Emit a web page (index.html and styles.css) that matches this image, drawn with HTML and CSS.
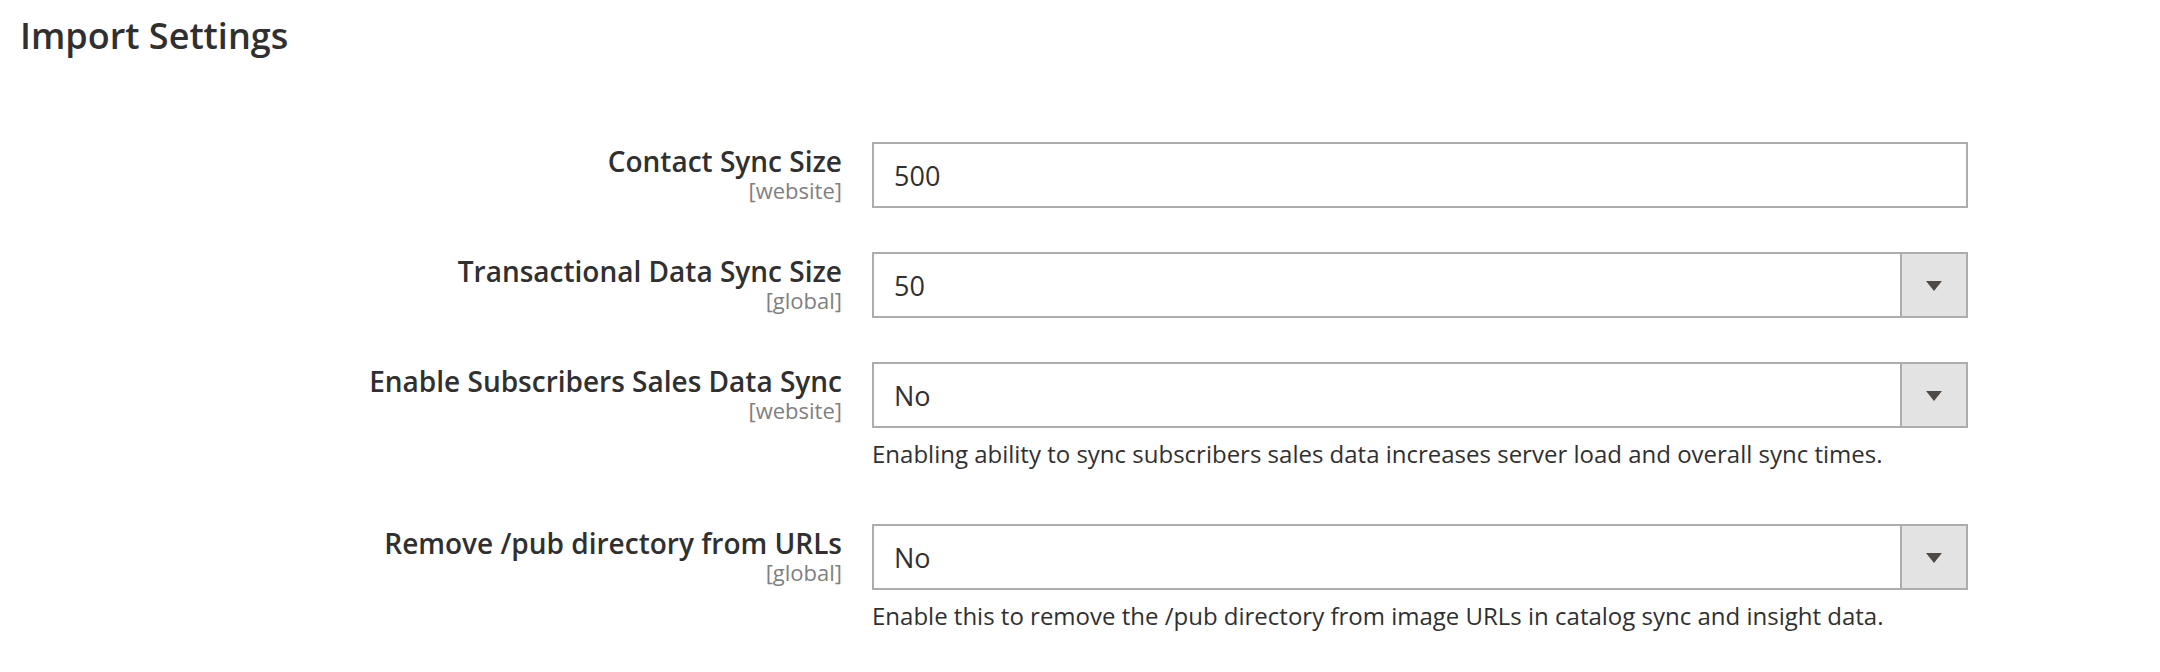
FILE: index.html
```html
<!DOCTYPE html>
<html lang="en">
<head>
<meta charset="utf-8">
<title>Import Settings</title>
<link rel="stylesheet" href="styles.css">
</head>
<body>
<div class="page">
  <h1 class="section-title">Import Settings</h1>
  <div class="fields">
    <div class="field">
      <div class="field-label">
        <span class="label-text">Contact Sync Size</span>
        <span class="scope">[website]</span>
      </div>
      <div class="field-control">
        <div class="input"><span class="value">500</span></div>
      </div>
    </div>
    <div class="field">
      <div class="field-label">
        <span class="label-text">Transactional Data Sync Size</span>
        <span class="scope">[global]</span>
      </div>
      <div class="field-control">
        <div class="input select"><span class="value">50</span><span class="select-btn"><svg width="16" height="10" viewBox="0 0 16 10"><polygon points="0,0 16,0 8,10" fill="#514943"/></svg></span></div>
      </div>
    </div>
    <div class="field">
      <div class="field-label">
        <span class="label-text">Enable Subscribers Sales Data Sync</span>
        <span class="scope">[website]</span>
      </div>
      <div class="field-control">
        <div class="input select"><span class="value">No</span><span class="select-btn"><svg width="16" height="10" viewBox="0 0 16 10"><polygon points="0,0 16,0 8,10" fill="#514943"/></svg></span></div>
        <p class="note">Enabling ability to sync subscribers sales data increases server load and overall sync times.</p>
      </div>
    </div>
    <div class="field">
      <div class="field-label">
        <span class="label-text">Remove /pub directory from URLs</span>
        <span class="scope">[global]</span>
      </div>
      <div class="field-control">
        <div class="input select"><span class="value">No</span><span class="select-btn"><svg width="16" height="10" viewBox="0 0 16 10"><polygon points="0,0 16,0 8,10" fill="#514943"/></svg></span></div>
        <p class="note">Enable this to remove the /pub directory from image URLs in catalog sync and insight data.</p>
      </div>
    </div>
  </div>
</div>
</body>
</html>
```

FILE: styles.css
```css
html, body {
  margin: 0;
  padding: 0;
  background: #ffffff;
}
body {
  font-family: "Open Sans", "Liberation Sans", sans-serif;
  color: #303030;
}
.page {
  padding: 16px 20px 0 20px;
}
.section-title {
  margin: 0;
  font-size: 36px;
  line-height: 40px;
  font-weight: 600;
  color: #303030;
}
.fields {
  margin-top: 86px;
  display: flex;
  flex-direction: column;
  gap: 44px;
}
.field {
  display: flex;
  gap: 30px;
}
.field-label {
  width: 822px;
  flex: none;
  display: flex;
  flex-direction: column;
  align-items: flex-end;
  text-align: right;
  padding-top: 2px;
}
.label-text {
  font-size: 28px;
  line-height: 34px;
  font-weight: 600;
  color: #303030;
}
.scope {
  margin-top: 0;
  font-size: 22px;
  line-height: 24px;
  color: #808080;
}
.field-control {
  width: 1096px;
  flex: none;
}
.input {
  box-sizing: border-box;
  height: 66px;
  border: 2px solid #adadad;
  background: #fff;
  display: flex;
  align-items: stretch;
}
.value {
  flex: 1;
  display: flex;
  align-items: center;
  padding: 0 20px;
  font-size: 27px;
  color: #303030;
}
.select-btn {
  flex: none;
  width: 64px;
  border-left: 2px solid #adadad;
  background: #e3e3e3;
  display: flex;
  align-items: center;
  justify-content: center;
}
.select-btn svg {
  display: block;
  margin-top: 2px;
}
.note {
  margin: 8px 0 0 0;
  padding-bottom: 8px;
  font-size: 24px;
  line-height: 36px;
  color: #303030;
}
```
